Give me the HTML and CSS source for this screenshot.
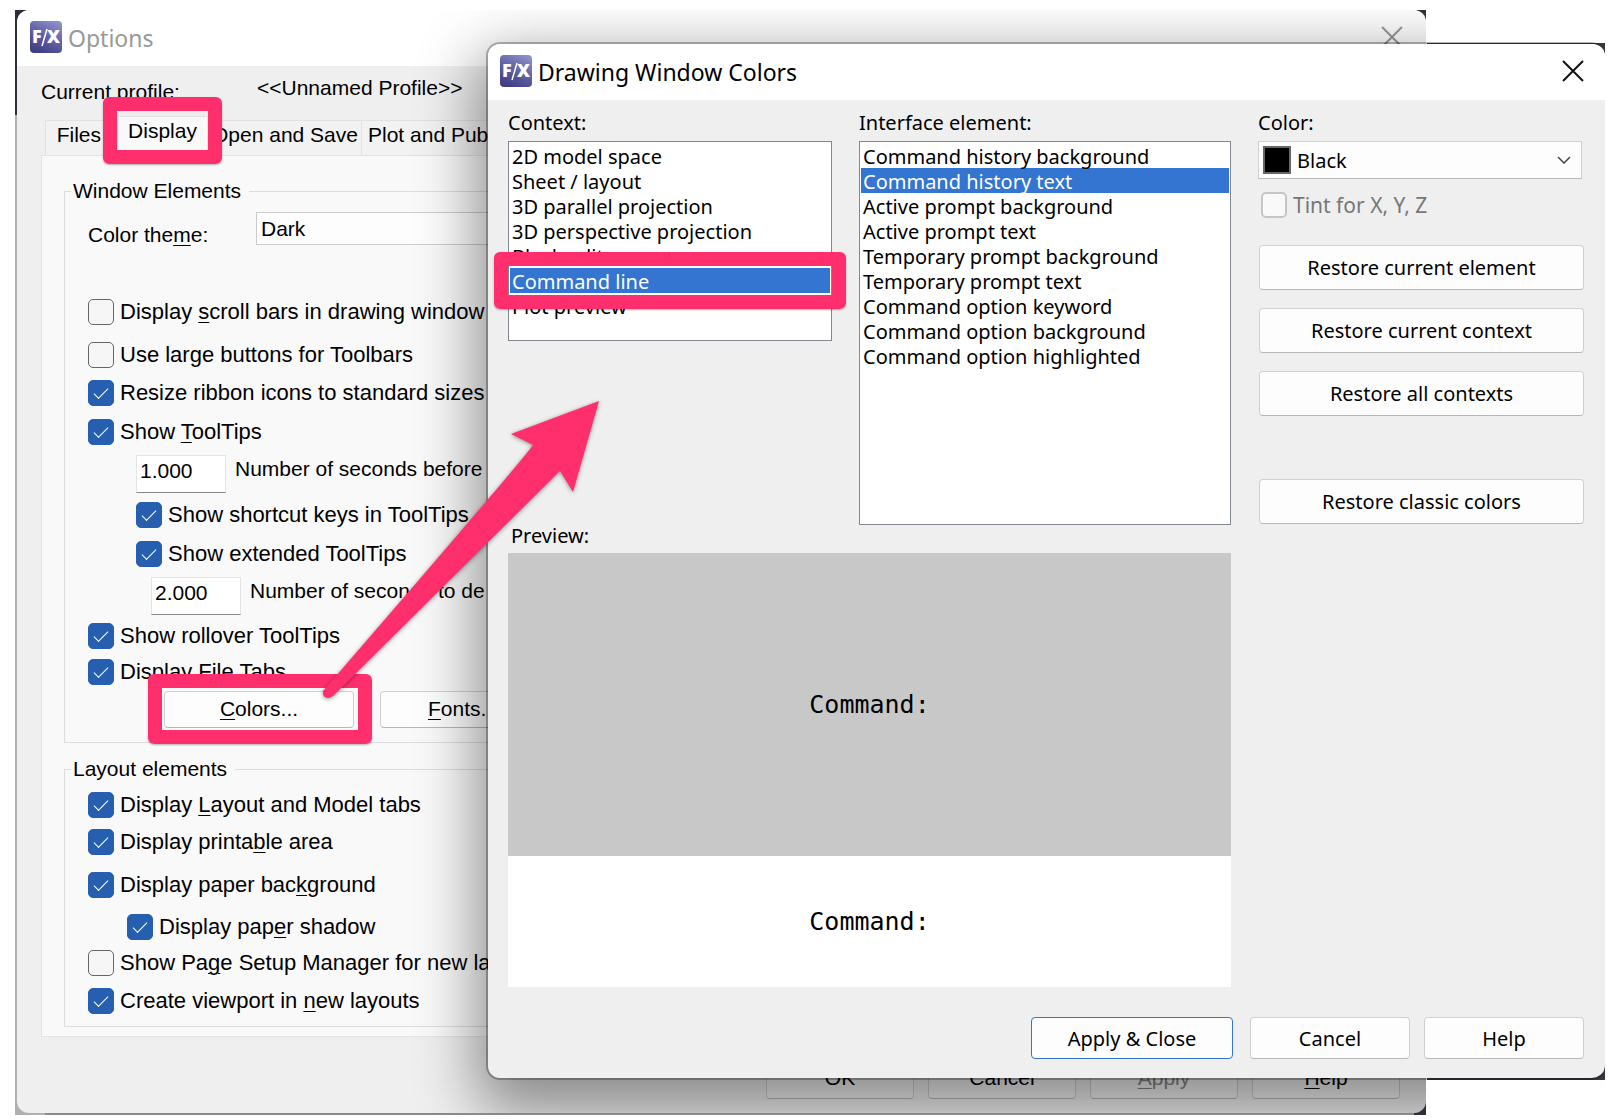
FILE: index.html
```html
<!DOCTYPE html>
<html lang="en">
<head>
<meta charset="utf-8">
<title>Drawing Window Colors</title>
<link rel="stylesheet" href="styles.css">
</head>
<body>
<main class="desktop">
  <div class="frame frame-options">
  <section class="window options" aria-label="Options">
    <header class="titlebar">
      <svg class="logo" viewBox="0 0 32 32" aria-hidden="true">
        <defs><linearGradient id="logo-fill" x1="0.8" y1="0" x2="0.3" y2="1"><stop offset="0" stop-color="#8d8fca"/><stop offset="0.5" stop-color="#6261a5"/><stop offset="1" stop-color="#403e84"/></linearGradient></defs>
        <rect width="32" height="32" rx="4" fill="url(#logo-fill)"/>
        <text class="logo-letter" x="2" y="22">F</text>
        <path d="M12 25 17 8" stroke="#fff" stroke-width="1.5"/>
        <text class="logo-letter" x="17" y="22">X</text>
      </svg>
      <h1 class="title title-muted">Options</h1>
      <button class="close close-muted" aria-label="Close"><svg viewBox="0 0 20 20"><path d="M0 0 20 20M20 0 0 20"/></svg></button>
    </header>
    <div class="profile"><span class="profile-label">Current profile:</span><span class="profile-name">&lt;&lt;Unnamed Profile&gt;&gt;</span></div>
    <nav class="tabs" role="tablist">
      <button class="tab tab-files" role="tab">Files</button>
      <button class="tab tab-active" role="tab" aria-selected="true">Display</button>
      <button class="tab tab-open" role="tab">Open and Save</button>
      <button class="tab tab-plot" role="tab">Plot and Pub</button>
    </nav>
    <div class="panel">
      <fieldset class="group group-window">
        <legend>Window Elements</legend>
        <div class="row row-theme"><label class="theme-label" for="theme">Color the<u>m</u>e:</label>
          <select id="theme" class="theme"><option>Dark</option></select></div>
        <label class="row row-l"><input type="checkbox" class="check"><span>Display <u>s</u>croll bars in drawing window</span></label>
        <label class="row row-m"><input type="checkbox" class="check"><span>Use large buttons for Toolbars</span></label>
        <label class="row row-m"><input type="checkbox" class="check" checked><span>Resize ribbon icons to standard sizes</span></label>
        <label class="row"><input type="checkbox" class="check" checked><span>Show <u>T</u>oolTips</span></label>
        <div class="row row-in row-number"><input id="before" class="number" value="1.000"><label for="before">Number of seconds before</label></div>
        <label class="row row-m row-in"><input type="checkbox" class="check" checked><span>Show shortcut keys in ToolTips</span></label>
        <label class="row row-in"><input type="checkbox" class="check" checked><span>Show extended ToolTips</span></label>
        <div class="row row-in2 row-number"><input id="delay" class="number" value="2.000"><label for="delay">Number of seconds to de</label></div>
        <label class="row row-s"><input type="checkbox" class="check" checked><span>Show rollover ToolTips</span></label>
        <label class="row row-s"><input type="checkbox" class="check" checked><span>Display File Tabs</span></label>
        <div class="row row-m group-buttons"><button class="btn btn-colors"><u>C</u>olors...</button><button class="btn btn-fonts"><u>F</u>onts...</button></div>
      </fieldset>
      <fieldset class="group group-layout">
        <legend>Layout elements</legend>
        <label class="row row-s"><input type="checkbox" class="check" checked><span>Display <u>L</u>ayout and Model tabs</span></label>
        <label class="row row-m"><input type="checkbox" class="check" checked><span>Display printa<u>b</u>le area</span></label>
        <label class="row row-l"><input type="checkbox" class="check" checked><span>Display paper bac<u>k</u>ground</span></label>
        <label class="row row-s row-shadow"><input type="checkbox" class="check" checked><span>Display pap<u>e</u>r shadow</span></label>
        <label class="row row-s"><input type="checkbox" class="check"><span>Show Pa<u>g</u>e Setup Manager for new lay</span></label>
        <label class="row"><input type="checkbox" class="check" checked><span>Create viewport in <u>n</u>ew layouts</span></label>
      </fieldset>
    </div>
    <footer class="options-footer">
      <button class="btn btn-low">OK</button><button class="btn btn-low">Cancel</button><button class="btn btn-low" disabled><u>A</u>pply</button><button class="btn btn-low"><u>H</u>elp</button>
    </footer>
  </section>
  </div>

  <div class="frame frame-colors">
  <section class="window colors" aria-label="Drawing Window Colors">
    <header class="titlebar">
      <svg class="logo" viewBox="0 0 32 32" aria-hidden="true">
        <rect width="32" height="32" rx="4" fill="url(#logo-fill)"/>
        <text class="logo-letter" x="2" y="22">F</text>
        <path d="M12 25 17 8" stroke="#fff" stroke-width="1.5"/>
        <text class="logo-letter" x="17" y="22">X</text>
      </svg>
      <h1 class="title">Drawing Window Colors</h1>
      <button class="close" aria-label="Close"><svg viewBox="0 0 20 20"><path d="M0 0 20 20M20 0 0 20"/></svg></button>
    </header>
    <div class="colors-body">
      <div class="col-context">
        <h2 class="label" id="ctx">Context:</h2>
        <ul class="list list-short" role="listbox" aria-labelledby="ctx">
          <li>2D model space</li><li>Sheet / layout</li><li>3D parallel projection</li><li>3D perspective projection</li><li>Block editor</li><li class="selected">Command line</li><li>Plot preview</li>
        </ul>
      </div>
      <div class="col-element">
        <h2 class="label" id="elt">Interface element:</h2>
        <ul class="list list-tall" role="listbox" aria-labelledby="elt">
          <li>Command history background</li><li class="selected">Command history text</li><li>Active prompt background</li><li>Active prompt text</li><li>Temporary prompt background</li><li>Temporary prompt text</li><li>Command option keyword</li><li>Command option background</li><li>Command option highlighted</li>
        </ul>
      </div>
      <div class="col-color">
        <label class="label" for="color">Color:</label>
        <div class="combo"><span class="swatch"></span>
          <select id="color" class="combo-select"><option>Black</option></select>
          <svg class="chevron" viewBox="0 0 14 8" aria-hidden="true"><path d="M1 1 7 7 13 1"/></svg></div>
        <label class="tint"><input type="checkbox" class="check" disabled>Tint for X, Y, Z</label>
        <div class="restore">
          <button class="btn">Restore current element</button>
          <button class="btn">Restore current context</button>
          <button class="btn">Restore all contexts</button>
          <button class="btn btn-classic">Restore classic colors</button>
        </div>
      </div>
      <div class="preview">
        <h2 class="label preview-label">Preview:</h2>
        <div class="preview-history">Command:</div>
        <div class="preview-line">Command:</div>
      </div>
    </div>
    <footer class="colors-footer">
      <button class="btn btn-primary">Apply &amp; Close</button><button class="btn">Cancel</button><button class="btn">Help</button>
    </footer>
  </section>
  </div>

  <div class="mark mark-tab"></div>
  <div class="mark mark-button"></div>
  <div class="mark mark-list"></div>
  <svg class="arrow" viewBox="0 0 290 310" aria-hidden="true"><path d="M284 9 196 42 218 53Q213 62 8 299Q7 306 14 306L18 304 245 79 258 100Z"/></svg>
</main>
</body>
</html>
```
FILE: styles.css
```css
* { box-sizing: border-box; }
body { margin: 0; background: #fff; color: #000; }
h1, h2, ul { margin: 0; padding: 0; font-weight: 400; list-style: none; }
button, select, input { font: inherit; color: inherit; }
u { text-decoration-thickness: 1px; text-underline-offset: 3px; }

.desktop { position: relative; min-height: 100vh; overflow: hidden; }

/* Slivers of the application behind each window */
.frame { position: absolute; }
.frame-options {
  top: 10px; left: 15px; right: 188px; padding: 0 0 2px 2px;
  background:
    linear-gradient(#2b2f38 105px, #b0b0b0 105px) left / 30px 100% no-repeat,
    linear-gradient(90deg, #8a8a8a, #8a8a8a) left bottom / calc(100% - 12px) 2px no-repeat,
    #2b2f38;
}
.frame-colors { top: 42px; left: 486px; right: 9px; }
.frame-colors::before { content: ""; position: absolute; inset: 1px 0 0 auto; width: 178px; background: #33373f; }

.window { position: relative; background: #efefef; }
.titlebar { display: flex; align-items: flex-start; height: 56px; padding: 11px 22px 0 12px; background: #fff; border-radius: 12px 12px 0 0; }
.logo { width: 32px; height: 32px; flex: none; }
.logo-letter { font: 800 18px "Open Sans", sans-serif; fill: #fff; }
.title { flex: 1; margin-left: 6px; font: 400 23px/34px "Noto Sans", sans-serif; }
.title-muted { color: #999; }
.close { padding: 0; margin-top: 6px; width: 20px; height: 20px; border: 0; background: none; }
.close svg { display: block; width: 20px; height: 20px; overflow: visible; fill: none; stroke: #111; stroke-width: 2; }
.close-muted svg { stroke: #999; }

.check { appearance: none; flex: none; width: 26px; height: 26px; margin: 0 6px 0 0; border: 1px solid #666; border-radius: 5px; background: #f6f6f6; display: grid; place-items: center; }
.check:checked { border-color: #265eb0; background: #265eb0; }
.check:checked::after { content: ""; width: 13px; height: 6px; margin-top: -4px; border: solid #fff; border-width: 0 0 1px 1px; transform: rotate(-45deg); }
.check:disabled { border: 2px solid #c6c6c6; background: #f9f9f9; }

.btn { height: 45px; padding: 0; border: 1px solid #d0d0d0; border-bottom-color: #b8b8b8; border-radius: 4px; background: #fdfdfd; }

/* Options window */
.options { padding-bottom: 14px; border-radius: 12px; font: 21px/26px "Liberation Sans", Arial, sans-serif; white-space: nowrap; overflow: hidden; }
.options::after { content: ""; position: absolute; inset: 34px -178px 35px 471px; border-radius: 14px; box-shadow: 0 22px 60px 12px rgba(0, 0, 0, 0.42); pointer-events: none; }
.options .titlebar { padding: 11px 24px 0 13px; }
.profile { display: flex; height: 50px; padding: 9px 0 0 24px; }
.profile-label { width: 216px; padding-top: 4px; }
.tabs { display: flex; align-items: flex-end; height: 39px; padding-left: 28px; }
.tab { height: 35px; padding: 0 4px 6px; border: 1px solid #e2e2e2; border-width: 1px 1px 0 0; background: #f2f2f2; text-align: right; }
.tab-files { width: 73px; padding-right: 16px; border-left-width: 1px; }
.tab-active { width: 90px; height: 39px; padding-bottom: 10px; background: #f9f9f9; text-align: center; }
.tab-open { width: 154px; }
.tab-plot { padding-left: 6px; }
.panel { margin-left: 24px; padding: 22px 0 9px 22px; border: 1px solid #e2e2e2; border-right: 0; background: #f9f9f9; }
.group { min-width: 0; margin: 0; padding: 0 0 0 23px; border: 1px solid #dcdcdc; border-right: 0; }
.group legend { margin-left: -17px; padding: 0 8px 0 2px; }
.group-window { padding-bottom: 14px; }
.group-layout { margin-top: 13px; padding-top: 5px; padding-bottom: 5px; }
.row { display: flex; align-items: center; height: 40px; }
.row span { font-size: 22px; }
.row-theme { height: 52px; align-items: flex-start; padding-top: 8px; margin-bottom: 32px; }
.theme-label { width: 168px; padding-top: 10px; }
.theme { appearance: none; flex: 1; height: 33px; padding: 0 4px; border: 1px solid #ccc; background: #fdfdfd; }
.row-l { height: 48px; }
.row-m { height: 38px; }
.row-s { height: 36px; }
.row-in { padding-left: 48px; }
.row-in2 { padding-left: 63px; }
.row-number { gap: 9px; height: 44px; }
.row-number label { padding-bottom: 10px; }
.row-shadow { padding-left: 39px; }
.number { width: 90px; height: 38px; padding: 0 3px 6px; border: 1px solid #e4e4e4; border-bottom-color: #888; background: #fff; }
.group-buttons { gap: 26px; padding-left: 76px; }
.btn-colors { width: 190px; height: 37px; }
.btn-fonts { width: 166px; height: 37px; }
.options-footer { display: flex; justify-content: flex-end; gap: 14px; padding: 25px 26px 0 0; }
.btn-low { width: 148px; height: 37px; padding-bottom: 6px; background: #f4f4f4; }
.btn-low:disabled { color: #888; }

/* Drawing Window Colors dialog */
.colors { padding-bottom: 19px; border: 2px solid rgba(0, 0, 0, 0.28); border-right: 0; border-radius: 14px; background-clip: padding-box; font: 20px/25px "Noto Sans", Tahoma, sans-serif; }
.colors-body { display: grid; grid-template-columns: 324px 372px 1fr; column-gap: 27px; padding: 9px 21px 0 20px; }
.label { display: block; height: 32px; font-size: 20px; line-height: 27px; }
.list { padding: 1px; border: 1px solid #828790; background: #fff; }
.list li { height: 25px; padding-left: 2px; line-height: 27px; }
.list-short { height: 200px; }
.list-tall { height: 384px; }
.list .selected { background: #3375d0; color: #fff; }
.col-color { grid-row: 1 / 3; grid-column: 3; }
.combo { display: flex; align-items: center; height: 38px; margin-right: 2px; padding-left: 4px; border: 1px solid #d0d0d0; border-bottom-color: #b8b8b8; background: #fdfdfd; }
.swatch { flex: none; width: 28px; height: 28px; border: 2px solid #666; background: #000; }
.combo-select { appearance: none; flex: 1; height: 36px; padding: 0 6px; border: 0; background: none; }
.chevron { width: 14px; height: 8px; margin-right: 10px; fill: none; stroke: #444; stroke-width: 1.5; }
.tint { display: flex; align-items: center; margin: 13px 0 27px 3px; color: #777; font-size: 21px; }
.restore { display: grid; row-gap: 18px; margin-left: 1px; }
.btn-classic { margin-top: 45px; }
.preview { grid-column: 1 / 3; }
.preview-label { height: 28px; padding-left: 3px; line-height: 22px; }
.preview-history, .preview-line { display: grid; place-items: center; font: 25px/30px "DejaVu Sans Mono", monospace; }
.preview-history { height: 303px; background: #c8c8c8; }
.preview-line { height: 131px; background: #fff; }
.colors-footer { display: flex; justify-content: flex-end; gap: 14px; padding: 30px 21px 0 0; }
.colors-footer .btn { width: 160px; height: 42px; }
.colors-footer .btn-primary { width: 202px; margin-right: 3px; border-color: #3375d0; }

/* Tutorial highlights laid over the windows */
.mark { position: absolute; border: 14px solid #ff2f6e; border-radius: 6px; box-shadow: 0 1px 2px rgba(0, 0, 0, 0.3); }
.mark-tab { left: 103px; top: 97px; width: 119px; height: 67px; }
.mark-button { left: 148px; top: 674px; width: 224px; height: 70px; }
.mark-list { left: 494px; top: 252px; width: 352px; height: 57px; }
.arrow { position: absolute; left: 315px; top: 392px; width: 290px; height: 310px; fill: #ff2f6e; filter: drop-shadow(0 1px 2px rgba(0, 0, 0, 0.4)); }
```
